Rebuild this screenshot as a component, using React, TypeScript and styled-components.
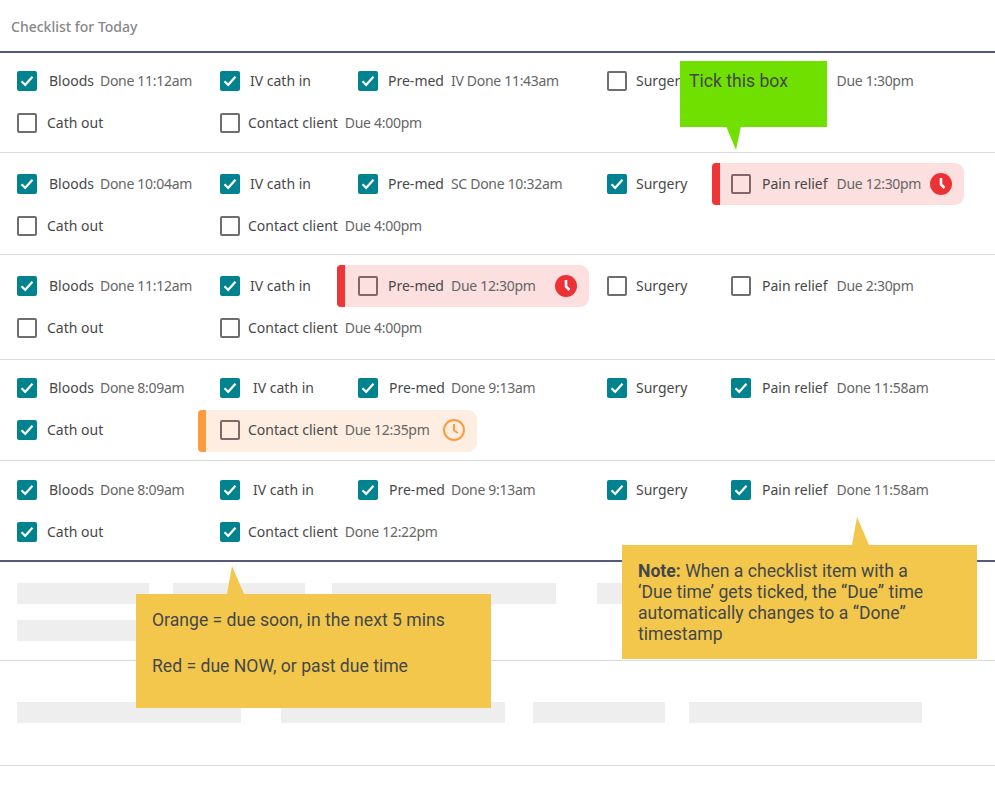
import styled, { createGlobalStyle } from "styled-components";

//* ==> Data <== *//
type Item = {
  label: string;
  time?: string;
  done?: boolean;
  width?: number; // column width
  gap?: number; // checkbox -> label
  timeGap?: number; // label -> time
  lift?: number;
  alert?: "red" | "orange";
  pull?: number;
  pillWidth?: number;
};

type Row = { height: number; pad: number; lines: Item[][]; dark?: boolean };

const col = [203, 138, 249, 124];

const rows: Row[] = [
  {
    height: 100,
    pad: 7,
    lines: [
      [
        { label: "Bloods", time: "Done 11:12am", done: true, width: col[0], gap: 12, timeGap: 6 },
        { label: "IV cath in", done: true, width: col[1], lift: 1 },
        { label: "Pre-med", time: "IV Done 11:43am", done: true, width: col[2] },
        { label: "Surgery", width: col[3], gap: 9 },
        { label: "Pain relief", time: "Due 1:30pm", gap: 9, timeGap: 11 },
      ],
      [
        { label: "Cath out", width: col[0] },
        { label: "Contact client", time: "Due 4:00pm", width: col[1], gap: 8 },
      ],
    ],
  },
  {
    height: 102,
    pad: 10,
    lines: [
      [
        { label: "Bloods", time: "Done 10:04am", done: true, width: col[0], gap: 12, timeGap: 6 },
        { label: "IV cath in", done: true, width: col[1], lift: 1 },
        { label: "Pre-med", time: "SC Done 10:32am", done: true, width: col[2] },
        { label: "Surgery", done: true, width: col[3], gap: 9 },
        { label: "Pain relief", time: "Due 12:30pm", gap: 11, timeGap: 9, alert: "red", pull: 19, pillWidth: 252 },
      ],
      [
        { label: "Cath out", width: col[0] },
        { label: "Contact client", time: "Due 4:00pm", width: col[1], gap: 8 },
      ],
    ],
  },
  {
    height: 105,
    pad: 10,
    lines: [
      [
        { label: "Bloods", time: "Done 11:12am", done: true, width: col[0], gap: 12, timeGap: 6 },
        { label: "IV cath in", done: true, width: col[1], lift: 1 },
        { label: "Pre-med", time: "Due 12:30pm", width: col[2], alert: "red", pull: 21, pillWidth: 252 },
        { label: "Surgery", width: col[3], gap: 9 },
        { label: "Pain relief", time: "Due 2:30pm", gap: 11, timeGap: 9 },
      ],
      [
        { label: "Cath out", width: col[0] },
        { label: "Contact client", time: "Due 4:00pm", width: col[1], gap: 8 },
      ],
    ],
  },
  {
    height: 101,
    pad: 7,
    lines: [
      [
        { label: "Bloods", time: "Done 8:09am", done: true, width: col[0], gap: 12, timeGap: 6 },
        { label: "IV cath in", done: true, width: col[1], gap: 13, lift: 1 },
        { label: "Pre-med", time: "Done 9:13am", done: true, width: col[2], gap: 11, timeGap: 6 },
        { label: "Surgery", done: true, width: col[3], gap: 9 },
        { label: "Pain relief", time: "Done 11:58am", done: true, gap: 11, timeGap: 9 },
      ],
      [
        { label: "Cath out", done: true, width: col[0] },
        { label: "Contact client", time: "Due 12:35pm", width: col[1], gap: 8, alert: "orange", pull: 22, pillWidth: 279 },
      ],
    ],
  },
  {
    height: 101,
    pad: 8,
    dark: true,
    lines: [
      [
        { label: "Bloods", time: "Done 8:09am", done: true, width: col[0], gap: 12, timeGap: 6 },
        { label: "IV cath in", done: true, width: col[1], gap: 13, lift: 1 },
        { label: "Pre-med", time: "Done 9:13am", done: true, width: col[2], gap: 11, timeGap: 6 },
        { label: "Surgery", done: true, width: col[3], gap: 9 },
        { label: "Pain relief", time: "Done 11:58am", done: true, gap: 11, timeGap: 9 },
      ],
      [
        { label: "Cath out", done: true, width: col[0] },
        { label: "Contact client", time: "Done 12:22pm", done: true, width: col[1], gap: 8 },
      ],
    ],
  },
];

const ClockIcon = ({ kind }: { kind: "red" | "orange" }) =>
  kind === "red" ? (
    <svg width="22" height="22" viewBox="0 0 22 22">
      <circle cx="11" cy="11" r="11" fill="#ee3135" />
      <path d="M11 5V11.5L14.5 15" fill="none" stroke="#fff" strokeWidth="2.6" />
    </svg>
  ) : (
    <svg width="22" height="22" viewBox="0 0 22 22">
      <circle cx="11" cy="11" r="10" fill="none" stroke="#ff9a3e" strokeWidth="2" />
      <path d="M11 5V11.5L15 14" fill="none" stroke="#ff9a3e" strokeWidth="2" />
    </svg>
  );

const CheckItem = ({ item }: { item: Item }) => {
  const content = (
    <>
      <Box $done={item.done} $tinted={!!item.alert}>
        {item.done && (
          <svg width="14" height="12" viewBox="0 0 14 12">
            <path d="M1.5 6.2L5.2 9.8L12.5 1.8" fill="none" stroke="#fff" strokeWidth="2.2" />
          </svg>
        )}
      </Box>
      <Label $gap={item.gap ?? 10} $lift={item.lift ?? 2}>
        {item.label}
      </Label>
      {item.time && <Time $gap={item.timeGap ?? 7}>{item.time}</Time>}
    </>
  );

  return (
    <Cell $width={item.width}>
      {item.alert ? (
        <Pill $kind={item.alert} $pull={item.pull ?? 0} $width={item.pillWidth ?? 252}>
          {content}
          <PillIcon>
            <ClockIcon kind={item.alert} />
          </PillIcon>
        </Pill>
      ) : (
        content
      )}
    </Cell>
  );
};

const App = () => {
  return (
    <Wrapper>
      <GlobalStyle />
      <Header>Checklist for Today</Header>
      {rows.map((row, i) => (
        <RowBox key={i} $height={row.height} $pad={row.pad} $dark={row.dark}>
          {row.lines.map((line, j) => (
            <Line key={j}>
              {line.map((item) => (
                <CheckItem key={item.label} item={item} />
              ))}
            </Line>
          ))}
        </RowBox>
      ))}
      <GhostRow $height={99} $pad={21}>
        <GhostLine>
          <Ghost $width={132} $gap={24} />
          <Ghost $width={132} $gap={27} />
          <Ghost $width={224} $gap={41} />
          <Ghost $width={132} $gap={0} />
        </GhostLine>
        <GhostLine>
          <Ghost $width={224} $gap={0} />
        </GhostLine>
      </GhostRow>
      <GhostRow $height={105} $pad={41}>
        <GhostLine>
          <Ghost $width={224} $gap={40} />
          <Ghost $width={224} $gap={28} />
          <Ghost $width={132} $gap={24} />
          <Ghost $width={233} $gap={0} />
        </GhostLine>
      </GhostRow>

      <Callout $x={680} $y={61} $w={147} $h={66} $bg="#70e000" $pad="10px 9px">
        Tick this box
        <Tail viewBox="0 0 16 24" $w={16} $h={24} $x={46} $top={65}>
          <path d="M0 0H15L10 24Z" fill="#70e000" />
        </Tail>
      </Callout>

      <Callout $x={136} $y={594} $w={355} $h={114} $bg="#f2c74c" $pad="15px 16px" $lineHeight={23}>
        <p>Orange = due soon, in the next 5 mins</p>
        <p>&nbsp;</p>
        <p>Red = due NOW, or past due time</p>
        <Tail viewBox="0 0 18 28" $w={18} $h={28} $x={91} $top={-28}>
          <path d="M5 0L0 28H17Z" fill="#f2c74c" />
        </Tail>
      </Callout>

      <Callout $x={622} $y={545} $w={355} $h={114} $bg="#f2c74c" $pad="16px 16px">
        <p>
          <strong>Note:</strong> When a checklist item with a
        </p>
        <p>‘Due time’ gets ticked, the “Due” time</p>
        <p>automatically changes to a “Done”</p>
        <p>timestamp</p>
        <Tail viewBox="0 0 18 28" $w={18} $h={28} $x={230} $top={-28}>
          <path d="M5 0L0 28H17Z" fill="#f2c74c" />
        </Tail>
      </Callout>
    </Wrapper>
  );
};

const GlobalStyle = createGlobalStyle`
  html, body {
    margin: 0;
    padding: 0;
    background: #ffffff;
  }
  * {
    box-sizing: border-box;
  }
`;

const Wrapper = styled.div`
  position: relative;
  width: 995px;
  height: 789px;
  overflow: hidden;
  font-family: "Noto Sans", "Liberation Sans", sans-serif;
  font-size: 14px;
  color: #4a4a4a;
`;

const Header = styled.div`
  height: 53px;
  padding: 18px 0 0 11px;
  font-size: 14px;
  line-height: 18px;
  font-weight: 500;
  color: #878787;
  border-bottom: 2px solid #55597f;
`;

const RowBox = styled.div<{ $height: number; $pad: number; $dark?: boolean }>`
  height: ${(props) => props.$height}px;
  padding: ${(props) => props.$pad}px 0 0 17px;
  border-bottom: ${(props) => (props.$dark ? "2px solid #55597f" : "1px solid #dcdcdc")};
`;

const Line = styled.div`
  display: flex;
  align-items: center;
  height: 42px;
`;

const Cell = styled.div<{ $width?: number }>`
  display: flex;
  align-items: center;
  flex: none;
  width: ${(props) => (props.$width ? `${props.$width}px` : "auto")};
  white-space: nowrap;
`;

const Box = styled.span<{ $done?: boolean; $tinted?: boolean }>`
  display: flex;
  align-items: center;
  justify-content: center;
  flex: none;
  width: 20px;
  height: 20px;
  border-radius: 2px;
  background: ${(props) => (props.$done ? "#00838f" : "transparent")};
  border: ${(props) =>
    props.$done ? "none" : `2px solid ${props.$tinted ? "#806868" : "#6e6e6e"}`};
`;

const Label = styled.span<{ $gap: number; $lift: number }>`
  margin-left: ${(props) => props.$gap}px;
  padding-bottom: ${(props) => props.$lift}px;
  color: #484848;
`;

const Time = styled.span<{ $gap: number }>`
  margin-left: ${(props) => props.$gap}px;
  padding-bottom: 2px;
  letter-spacing: -0.3px;
  color: #666666;
`;

const Pill = styled.div<{ $kind: "red" | "orange"; $pull: number; $width: number }>`
  display: flex;
  align-items: center;
  flex: none;
  height: 42px;
  width: ${(props) => props.$width}px;
  margin-left: -${(props) => props.$pull}px;
  margin-top: ${(props) => (props.$kind === "orange" ? "2px" : "0")};
  padding-left: ${(props) => props.$pull}px;
  padding-bottom: ${(props) => (props.$kind === "orange" ? "2px" : "0")};
  border-radius: 4px 9px 9px 4px;
  overflow: hidden;
  position: relative;
  background: ${(props) => (props.$kind === "red" ? "#fcdfdf" : "#feeee1")};

  &::before {
    content: "";
    position: absolute;
    left: 0;
    top: 0;
    bottom: 0;
    width: 8px;
    background: ${(props) => (props.$kind === "red" ? "#f03538" : "#ff9a3e")};
  }
`;

const PillIcon = styled.span`
  display: flex;
  margin-left: auto;
  margin-right: 12px;
`;

const GhostRow = styled.div<{ $height: number; $pad: number }>`
  height: ${(props) => props.$height}px;
  padding: ${(props) => props.$pad}px 0 0 17px;
  border-bottom: 1px solid #dcdcdc;
`;

const GhostLine = styled.div`
  display: flex;
  margin-bottom: 16px;
`;

const Ghost = styled.div<{ $width: number; $gap: number }>`
  width: ${(props) => props.$width}px;
  height: 21px;
  margin-right: ${(props) => props.$gap}px;
  background: #eeeeee;
`;

const Callout = styled.div<{
  $x: number;
  $y: number;
  $w: number;
  $h: number;
  $bg: string;
  $pad: string;
  $lineHeight?: number;
}>`
  position: absolute;
  left: ${(props) => props.$x}px;
  top: ${(props) => props.$y}px;
  width: ${(props) => props.$w}px;
  height: ${(props) => props.$h}px;
  padding: ${(props) => props.$pad};
  background: ${(props) => props.$bg};
  font-family: Roboto, "Liberation Sans", sans-serif;
  font-size: 17.6px;
  line-height: ${(props) => props.$lineHeight ?? 21}px;
  color: #44474a;

  p {
    margin: 0;
    white-space: nowrap;
  }
`;

const Tail = styled.svg<{ $w: number; $h: number; $x: number; $top: number }>`
  position: absolute;
  left: ${(props) => props.$x}px;
  top: ${(props) => props.$top}px;
  width: ${(props) => props.$w}px;
  height: ${(props) => props.$h}px;
`;

export default App;
